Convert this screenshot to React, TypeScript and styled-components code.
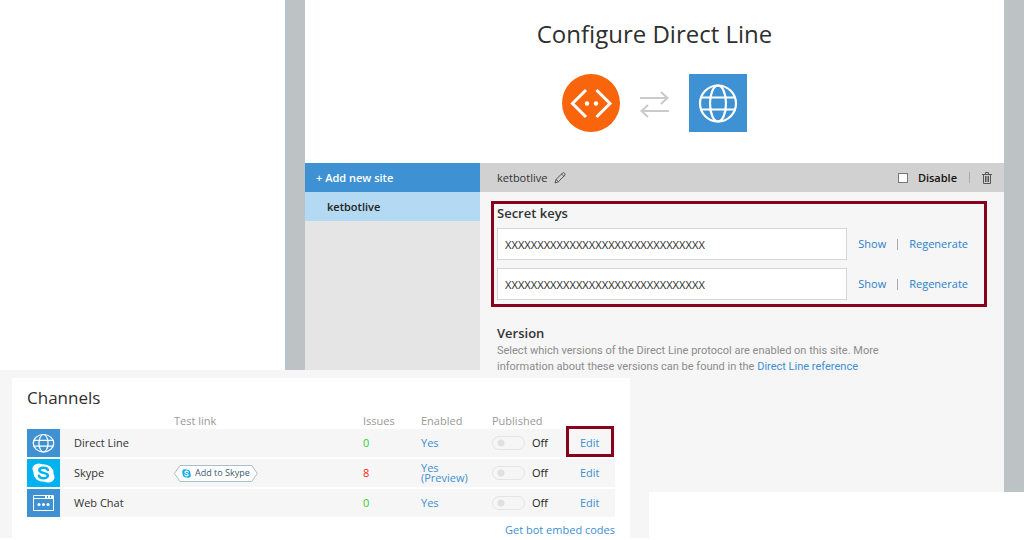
import React from "react";
import styled, { createGlobalStyle, css } from "styled-components";

const blue = "#3e92d4";
const linkBlue = "#3f8fd2";
const crimson = "#86021d";

const GlobalStyle = createGlobalStyle`
  * { box-sizing: border-box; }
  body {
    margin: 0;
    background: #fff;
    color: #333;
    font-family: "Open Sans", "Noto Sans", sans-serif;
    font-size: 11px;
    line-height: 16px;
  }
  h1, h2, h3, p { margin: 0; font-weight: 400; }
  button, input { font: inherit; color: inherit; }
`;

const Page = styled.div`
  position: relative;
  min-height: 540px;
`;

const ConfigureWindow = styled.main`
  display: flex;
  flex-direction: column;
  min-height: 492px;
  margin-left: 286px;
  border: solid #bdc2c5;
  border-width: 0 20px 0 19px;
  box-shadow: -1px 0 0 #a6cbe9;
`;

const Hero = styled.header`
  display: flex;
  flex-direction: column;
  align-items: center;
  gap: 24px;
  padding: 18px 0 31px;
`;

const Title = styled.h1`
  font-size: 24px;
  line-height: 32px;
  color: #2f2f2f;
`;

const Pair = styled.div`
  display: flex;
  align-items: center;
  gap: 20px;
  svg { display: block; }
`;

const Body = styled.div`
  flex: 1;
  display: grid;
  grid-template-columns: 175px 1fr;
`;

const Sites = styled.nav`
  display: flex;
  flex-direction: column;
  background: #e5e5e5;
`;

const SiteButton = styled.button<{ $primary?: boolean }>`
  height: 29px;
  border: 0;
  padding: 0 ${(p) => (p.$primary ? "11px" : "22px")};
  text-align: left;
  font-weight: 600;
  color: ${(p) => (p.$primary ? "#fff" : "#222")};
  background: ${(p) => (p.$primary ? blue : "#b3daf2")};
`;

const Detail = styled.section`
  display: flex;
  flex-direction: column;
  background: #f6f6f6;
`;

const Toolbar = styled.div`
  display: flex;
  align-items: center;
  height: 29px;
  padding: 0 12px 0 17px;
  background: #d1d1d1;
`;

const IconButton = styled.button`
  display: flex;
  border: 0;
  padding: 0;
  background: none;
`;

const SiteName = styled.span`
  margin-right: 7px;
`;

const DisableLabel = styled.label`
  display: flex;
  align-items: center;
  gap: 10px;
  margin-left: auto;
  font-weight: 600;
  color: #111;
`;

const CheckBox = styled.input`
  appearance: none;
  width: 10px;
  height: 10px;
  margin: 0;
  border: 1px solid #777;
  background: #fff;
`;

const Divider = styled.span`
  width: 1px;
  height: 11px;
  background: #aaa;
`;

const ToolDivider = styled(Divider)`
  margin: 0 12px;
`;

const Keys = styled.section`
  display: flex;
  flex-direction: column;
  gap: 6px;
  margin: 9px 17px 0 11px;
  padding: 0 16px 4px 3px;
  border: 3px solid ${crimson};
`;

const KeyList = styled.div`
  display: flex;
  flex-direction: column;
  gap: 8px;
`;

const Heading = styled.h2`
  font-size: 13px;
  line-height: 18px;
  font-weight: 600;
`;

const KeyRow = styled.div`
  display: flex;
  align-items: center;
  gap: 11px;
`;

const KeyInput = styled.input`
  flex: 1;
  min-width: 0;
  height: 32px;
  border: 1px solid #d6d6d6;
  padding: 0 7px;
  background: #fff;
  font-family: "Noto Sans", sans-serif;
`;

const link = css`
  color: ${linkBlue};
  text-decoration: none;
`;

const Link = styled.a`
  ${link}
`;

const TextButton = styled.button`
  ${link}
  border: 0;
  padding: 0;
  background: none;
  font-weight: 500;
  color: #2a80c8;
`;

const Version = styled.section`
  padding: 17px 17px 0;
`;

const Note = styled.p`
  max-width: 400px;
  padding-top: 1px;
  color: #8c8c8c;
  font-family: Roboto, sans-serif;
`;

const Overlay = styled.section`
  position: absolute;
  top: 370px;
  left: 0;
  width: 649px;
  padding: 8px 19px 0 12px;
  background: #f6f6f6;
`;

const Card = styled.div`
  padding: 8px 15px 0;
  height: 160px;
  background: #fff;
`;

const CardTitle = styled.h2`
  font-size: 17px;
  line-height: 24px;
  color: #2f2f2f;
`;

const Table = styled.table`
  width: 100%;
  table-layout: fixed;
  border-spacing: 0 2px;
  text-align: left;
  th, td { padding: 0; }
  thead th {
    height: 15px;
    padding-top: 3px;
    line-height: 12px;
    font-weight: 400;
    color: #999;
  }
  tbody tr { background: #f6f6f6; }
  tbody th { padding-left: 14px; font-weight: 400; }
  tbody td, tbody th { height: 28px; line-height: 10px; }
  svg { display: block; }
`;

const Col = styled.col<{ $w?: number }>`
  ${(p) => p.$w && `width: ${p.$w}px;`}
`;

const Issues = styled.span<{ $bad: boolean }>`
  color: ${(p) => (p.$bad ? "#f22" : "#3c3")};
`;

const EnabledLink = styled(Link)`
  display: block;
  width: 50px;
`;

const Switch = styled.label`
  display: flex;
  align-items: center;
  gap: 7px;
  color: #222;
`;

const SwitchInput = styled.input`
  appearance: none;
  width: 33px;
  height: 14px;
  margin: 0;
  border: 1px solid #e4e4e4;
  border-radius: 7px;
  background: radial-gradient(circle at 8px 6px, #e0e0e0 3px, transparent 4px);
`;

const EditLink = styled(Link)<{ $marked?: boolean }>`
  position: relative;
  ${(p) =>
    p.$marked &&
    css`
      &::after {
        content: "";
        position: absolute;
        inset: -9px -14px -7px;
        border: 3px solid ${crimson};
      }
    `}
`;

const SkypeButton = styled.button`
  position: relative;
  display: flex;
  align-items: center;
  gap: 4px;
  height: 17px;
  padding: 0 8px;
  border: 0;
  background: none;
  color: #3d5a70;
  font-size: 9px;
  line-height: 16px;
  white-space: nowrap;
  > svg, > span { position: relative; }
`;

const ButtonShape = styled.svg`
  && {
    position: absolute;
    inset: 0;
    width: 100%;
    height: 100%;
  }
`;

const Footer = styled.div`
  text-align: right;
  padding-top: 3px;
`;

const Globe = ({ size, height = size }: { size: number; height?: number }) => (
  <svg width={size} height={height} viewBox="0 0 58 58" preserveAspectRatio="none" aria-hidden="true">
    <rect width="58" height="58" fill={blue} />
    <g fill="none" stroke="#fff" strokeWidth="2.200">
      <circle cx="29" cy="29.500" r="18" />
      <ellipse cx="29" cy="29.500" rx="8" ry="18" />
      <path d="M12 23.500h34M12 35.500h34" />
    </g>
  </svg>
);

const BotLogo = () => (
  <svg width="58" height="58" viewBox="0 0 58 58" aria-hidden="true">
    <circle cx="29" cy="29" r="29" fill="#f8650c" />
    <path d="M24 16 10.500 29.500 24 43M34.500 16 48 29.500 34.500 43" fill="none" stroke="#fff" strokeWidth="3" />
    <circle cx="25" cy="29.500" r="2.200" fill="#fff" />
    <circle cx="34" cy="29.500" r="2.200" fill="#fff" />
  </svg>
);

const Arrows = () => (
  <svg width="29" height="30" viewBox="0 0 29 30" fill="none" stroke="#cacaca" strokeWidth="2" aria-hidden="true">
    <path d="M0 10h27M21 4l6.500 6-6.500 6M29 23H2M8 17l-6.500 6 6.500 6" />
  </svg>
);

const SkypeMark = ({ size, height = size }: { size: number; height?: number }) => (
  <svg width={size} height={height} viewBox="0 0 24 24" preserveAspectRatio="none" aria-hidden="true">
    <g fill="currentColor">
      <circle cx="12" cy="12" r="10.500" />
      <circle cx="7" cy="7" r="6.500" />
      <circle cx="17" cy="17" r="6.500" />
    </g>
    <path
      d="M16.500 8.500C16 6.500 14 5.700 12 5.700c-2.500 0-4.300 1.200-4.300 3 0 4.300 8.800 2 8.800 6.300 0 2-2 3.300-4.500 3.300-2.300 0-4.200-1-4.700-3"
      fill="none"
      stroke="var(--cut)"
      strokeWidth="2.800"
      strokeLinecap="round"
    />
  </svg>
);

const SkypeTile = styled.span`
  --cut: #00b3ef;
  display: flex;
  align-items: center;
  justify-content: center;
  height: 28px;
  background: #00b3ef;
  color: #fff;
`;

const SkypeBadge = styled.span`
  --cut: #fff;
  color: #14aeea;
`;

const ChatIcon = () => (
  <svg width="33" height="28" viewBox="0 0 33 28" aria-hidden="true">
    <rect width="33" height="28" fill={blue} />
    <path d="M6.500 6.500h20v15h-20zM6.500 9.500h20" fill="none" stroke="#fff" />
    <path d="M18 7h2v2h-2zM21 7h2v2h-2zM24 7h2v2h-2z" fill="#fff" />
    <g fill="#fff">
      <circle cx="12" cy="15.500" r="1.500" />
      <circle cx="16.500" cy="15.500" r="1.500" />
      <circle cx="21" cy="15.500" r="1.500" />
    </g>
  </svg>
);

const Pencil = () => (
  <svg width="12" height="12" viewBox="0 0 12 12" fill="none" stroke="#555" aria-hidden="true">
    <path d="M1 11l1-3.500L8.500 1q1-.8 2 .2t.3 2L4.300 9.800zM7.500 2l2.500 2.500M2 7.500l2.500 2.300" />
  </svg>
);

const Trash = () => (
  <svg width="10" height="12" viewBox="0 0 10 12" fill="none" stroke="#555" aria-hidden="true">
    <path d="M0 2.500h10M3.500 2V.5h3V2M1.500 2.500v9h7v-9M3.500 4v6M5 4v6M6.500 4v6" />
  </svg>
);

const secret = "X".repeat(31);

const channels = [
  { name: "Direct Line", icon: <Globe size={33} height={28} />, issues: 0, enabled: "Yes", marked: true },
  {
    name: "Skype",
    icon: (
      <SkypeTile>
        <SkypeMark size={23} height={20} />
      </SkypeTile>
    ),
    issues: 8,
    enabled: "Yes (Preview)",
    skype: true,
  },
  { name: "Web Chat", icon: <ChatIcon />, issues: 0, enabled: "Yes" },
];

export default function App() {
  return (
    <Page>
      <GlobalStyle />
      <ConfigureWindow>
        <Hero>
          <Title>Configure Direct Line</Title>
          <Pair>
            <BotLogo />
            <Arrows />
            <Globe size={58} />
          </Pair>
        </Hero>
        <Body>
          <Sites>
            <SiteButton $primary>+ Add new site</SiteButton>
            <SiteButton>ketbotlive</SiteButton>
          </Sites>
          <Detail>
            <Toolbar>
              <SiteName>ketbotlive</SiteName>
              <IconButton aria-label="Rename site"><Pencil /></IconButton>
              <DisableLabel>
                <CheckBox type="checkbox" />
                Disable
              </DisableLabel>
              <ToolDivider />
              <IconButton aria-label="Delete site"><Trash /></IconButton>
            </Toolbar>
            <Keys>
              <Heading>Secret keys</Heading>
              <KeyList>
                {[1, 2].map((n) => (
                  <KeyRow key={n}>
                    <KeyInput aria-label={`Secret key ${n}`} defaultValue={secret} />
                    <TextButton>Show</TextButton>
                    <Divider />
                    <TextButton>Regenerate</TextButton>
                  </KeyRow>
                ))}
              </KeyList>
            </Keys>
            <Version>
              <Heading>Version</Heading>
              <Note>
                Select which versions of the Direct Line protocol are enabled on this site. More
                information about these versions can be found in the <Link href="#reference">Direct Line reference</Link>
              </Note>
            </Version>
          </Detail>
        </Body>
      </ConfigureWindow>
      <Overlay>
        <Card>
          <CardTitle>Channels</CardTitle>
          <Table>
            <colgroup>
              <Col $w={33} />
              <Col $w={114} />
              <Col />
              <Col $w={58} />
              <Col $w={71} />
              <Col $w={88} />
              <Col $w={35} />
            </colgroup>
            <thead>
              <tr>
                <th />
                <th />
                <th scope="col">Test link</th>
                <th scope="col">Issues</th>
                <th scope="col">Enabled</th>
                <th scope="col">Published</th>
                <th />
              </tr>
            </thead>
            <tbody>
              {channels.map((c) => (
                <tr key={c.name}>
                  <td>{c.icon}</td>
                  <th scope="row">{c.name}</th>
                  <td>
                    {c.skype && (
                      <SkypeButton>
                        <ButtonShape viewBox="0 0 84 17" preserveAspectRatio="none" aria-hidden="true">
                          <path d="M6 .5h72l5.500 8-5.500 8H6L.5 8.500z" fill="#fff" stroke="#a9bfce" />
                        </ButtonShape>
                        <SkypeBadge><SkypeMark size={9} /></SkypeBadge>
                        <span>Add to Skype</span>
                      </SkypeButton>
                    )}
                  </td>
                  <td><Issues $bad={c.issues > 0}>{c.issues}</Issues></td>
                  <td><EnabledLink href="#enabled">{c.enabled}</EnabledLink></td>
                  <td>
                    <Switch>
                      <SwitchInput type="checkbox" role="switch" />
                      Off
                    </Switch>
                  </td>
                  <td><EditLink href="#edit" $marked={c.marked}>Edit</EditLink></td>
                </tr>
              ))}
            </tbody>
          </Table>
          <Footer><Link href="#embed">Get bot embed codes</Link></Footer>
        </Card>
      </Overlay>
    </Page>
  );
}
